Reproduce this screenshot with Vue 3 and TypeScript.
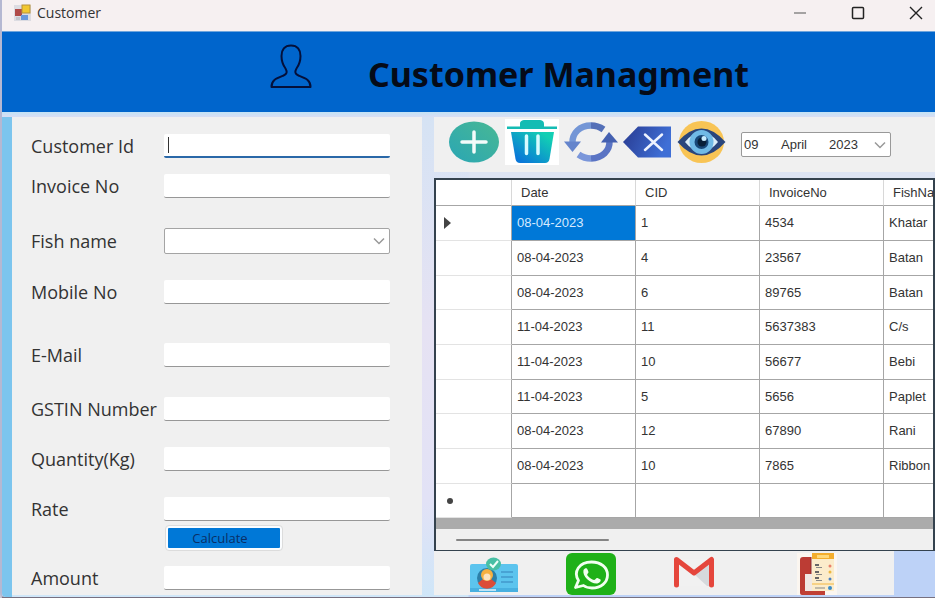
<script setup lang="ts">
import { ref } from 'vue'

interface Field {
  id: string
  label: string
  space: 'first' | 'near' | 'mid' | 'wide' | 'far'
  kind?: 'select'
}

interface Sale {
  date: string
  cid: string
  invoice: string
  fish: string
}

const fields: Field[] = [
  { id: 'customer-id', label: 'Customer Id', space: 'first' },
  { id: 'invoice-no', label: 'Invoice No', space: 'near' },
  { id: 'fish-name', label: 'Fish name', space: 'wide', kind: 'select' },
  { id: 'mobile-no', label: 'Mobile No', space: 'mid' },
  { id: 'email', label: 'E-Mail', space: 'far' },
  { id: 'gstin', label: 'GSTIN Number', space: 'wide' },
  { id: 'quantity', label: 'Quantity(Kg)', space: 'mid' },
  { id: 'rate', label: 'Rate', space: 'mid' },
]

const sales: Sale[] = [
  { date: '08-04-2023', cid: '1', invoice: '4534', fish: 'Khatar' },
  { date: '08-04-2023', cid: '4', invoice: '23567', fish: 'Batan' },
  { date: '08-04-2023', cid: '6', invoice: '89765', fish: 'Batan' },
  { date: '11-04-2023', cid: '11', invoice: '5637383', fish: 'C/s' },
  { date: '11-04-2023', cid: '10', invoice: '56677', fish: 'Bebi' },
  { date: '11-04-2023', cid: '5', invoice: '5656', fish: 'Paplet' },
  { date: '08-04-2023', cid: '12', invoice: '67890', fish: 'Rani' },
  { date: '08-04-2023', cid: '10', invoice: '7865', fish: 'Ribbon' },
]

const values = ref<Record<string, string>>({})
const amount = ref('')
const selected = ref(0)

function calculate(): void {
  const total = Number(values.value.quantity) * Number(values.value.rate)
  amount.value = Number.isFinite(total) ? String(total) : ''
}
</script>

<template>
  <div class="window">
    <div class="titlebar">
      <svg class="app-icon" viewBox="0 0 18 18" aria-hidden="true">
        <rect x="0" y="1" width="17" height="16" fill="#dcdce2" />
        <rect x="1" y="5" width="7" height="7" fill="#b04a48" />
        <rect x="8" y="1" width="8" height="8" fill="#f2c830" stroke="#b8923a" />
        <rect x="7" y="11" width="7" height="5" fill="#6a98dc" />
        <rect x="2" y="13" width="4" height="3" fill="#c4c6cc" />
      </svg>
      <span class="caption">Customer</span>
      <button class="win-btn" type="button" aria-label="Minimize">
        <svg viewBox="0 0 14 14"><path d="M1 7h12" stroke="#777" fill="none" stroke-width="1.3" /></svg>
      </button>
      <button class="win-btn" type="button" aria-label="Maximize">
        <svg viewBox="0 0 14 14"><rect x="1.5" y="1.5" width="11" height="11" rx="1" stroke="#222" fill="none" stroke-width="1.5" /></svg>
      </button>
      <button class="win-btn" type="button" aria-label="Close">
        <svg viewBox="0 0 14 14"><path d="M1 1l12 12M13 1L1 13" stroke="#222" fill="none" stroke-width="1.4" /></svg>
      </button>
    </div>

    <header class="banner">
      <svg class="person" viewBox="0 0 42 46" aria-hidden="true">
        <path
          d="M21 2.500C14.500 2.500 11.500 7 11.500 13C11.500 19 13 22 15.500 25.500C17.500 29 17 31 13.500 32.500C6 35.500 1.500 37 1.500 44H40.500C40.500 37 36 35.500 28.500 32.500C25 31 24.500 29 26.500 25.500C29 22 30.500 19 30.500 13C30.500 7 27.500 2.500 21 2.500Z"
          fill="none" stroke="#04103a" stroke-width="2" stroke-linejoin="round"
        />
      </svg>
      <h1>Customer Managment</h1>
    </header>

    <main>
      <form class="form" @submit.prevent="calculate">
        <div v-for="f in fields" :key="f.id" class="row" :class="f.space">
          <label :for="f.id">{{ f.label }}</label>
          <span v-if="f.kind === 'select'" class="select-wrap">
            <select :id="f.id" v-model="values[f.id]"></select>
            <svg class="chevron" viewBox="0 0 12 8"><path d="M1 1.500l5 5 5-5" fill="none" stroke="#999" stroke-width="1.500" /></svg>
          </span>
          <input v-else :id="f.id" v-model="values[f.id]" type="text" :class="{ active: f.space === 'first' }" />
        </div>
        <button class="calc" type="submit">Calculate</button>
        <div class="row near">
          <label for="amount">Amount</label>
          <input id="amount" v-model="amount" type="text" />
        </div>
      </form>

      <section class="records">
        <div class="toolbar">
          <button class="tool" type="button" aria-label="Add">
            <svg width="52" height="44" viewBox="0 0 52 44">
              <defs><linearGradient id="gAdd" x1="0" y1="1" x2="1" y2="0"><stop offset="0" stop-color="#2aa6b4" /><stop offset="1" stop-color="#48b894" /></linearGradient></defs>
              <ellipse cx="26" cy="22" rx="25" ry="20.500" fill="url(#gAdd)" />
              <path d="M26 12v20M14 22h24" stroke="#f3fbfa" stroke-width="3.500" stroke-linecap="round" />
            </svg>
          </button>
          <button class="tool" type="button" aria-label="Delete">
            <svg width="54" height="46" viewBox="0 0 54 46">
              <defs><linearGradient id="gBin" x1="0" y1="1" x2="1" y2="0"><stop offset="0.150" stop-color="#0a78d8" /><stop offset="0.850" stop-color="#12cfb4" /></linearGradient></defs>
              <rect width="54" height="46" fill="#fff" />
              <path d="M2 7.500H15V5C15 2 17 1 20 1H34C37 1 39 2 39 5V7.500H52V10H2Z" fill="#14bcb4" />
              <path d="M6 13H49L44.500 40C44 42.500 42.500 44 40 44H15C12.500 44 11 42.500 10.500 40Z" fill="url(#gBin)" />
              <path d="M21.500 17v17.500M33 17v17.500" stroke="#d8fbff" stroke-width="3.500" stroke-linecap="round" />
            </svg>
          </button>
          <button class="tool" type="button" aria-label="Refresh">
            <svg width="54" height="42" viewBox="0 0 54 42">
              <path d="M8.500 22C8 12 16 4.500 27 4.500" fill="none" stroke="#7496d6" stroke-width="6.500" />
              <path d="M27 4.500C32 4.500 36 6 39.500 8.500" fill="none" stroke="#5470b8" stroke-width="6.500" />
              <path d="M45.500 20C46 30 38 37 27 37.500" fill="none" stroke="#5a74c4" stroke-width="6.500" />
              <path d="M27 37.500C22 37.500 18 36 14.500 33.500" fill="none" stroke="#7a96da" stroke-width="6.500" />
              <path d="M0 20.500H17L8.500 31Z" fill="#6484cc" />
              <path d="M37 21.500H54L45 11Z" fill="#4460b0" />
            </svg>
          </button>
          <button class="tool" type="button" aria-label="Clear">
            <svg width="49" height="34" viewBox="0 0 49 34">
              <defs><linearGradient id="gClr" x1="0" y1="0" x2="1" y2="0.300"><stop offset="0" stop-color="#283a90" /><stop offset="1" stop-color="#3f6fd6" /></linearGradient></defs>
              <path d="M0 17L15 1.500H48V32.500H15Z" fill="url(#gClr)" />
              <path d="M22 9.500L39 25M39 9.500L22 25" stroke="#eef3ff" stroke-width="2.500" stroke-linecap="round" />
            </svg>
          </button>
          <button class="tool" type="button" aria-label="View">
            <svg width="49" height="44" viewBox="0 0 49 44">
              <ellipse cx="24.500" cy="22" rx="22.500" ry="21" fill="#f8c455" />
              <path d="M0.500 22Q24.500 -5 48.500 22Q24.500 49 0.500 22Z" fill="#2a467c" />
              <path d="M8 22Q24.500 2 41 22Q24.500 42 8 22Z" fill="#dbeef8" />
              <circle cx="24.500" cy="22" r="12" fill="#70bae6" />
              <circle cx="24.500" cy="22" r="7" fill="#184878" />
              <circle cx="25" cy="22" r="4.500" fill="#082038" />
              <circle cx="27" cy="18.500" r="2.500" fill="#c8ecff" />
            </svg>
          </button>
          <button class="date" type="button" aria-label="Date">
            <span class="day">09</span><span class="month">April</span><span class="year">2023</span>
            <svg class="chevron" viewBox="0 0 12 8"><path d="M1 1.500l5 5 5-5" fill="none" stroke="#999" stroke-width="1.500" /></svg>
          </button>
        </div>

        <div class="grid">
          <table>
            <colgroup><col class="c-mark" /><col /><col /><col /><col class="c-fish" /></colgroup>
            <thead>
              <tr><th></th><th>Date</th><th>CID</th><th>InvoiceNo</th><th>FishNa</th></tr>
            </thead>
            <tbody>
              <tr v-for="(s, i) in sales" :key="i" @click="selected = i">
                <td class="mark"><svg v-if="selected === i" width="7" height="12" viewBox="0 0 7 12"><path d="M0 0L7 6L0 12Z" fill="#444" /></svg></td>
                <td :class="{ selected: selected === i }">{{ s.date }}</td>
                <td>{{ s.cid }}</td>
                <td>{{ s.invoice }}</td>
                <td>{{ s.fish }}</td>
              </tr>
              <tr>
                <td class="mark"><svg width="12" height="8" viewBox="0 0 12 8"><circle cx="6" cy="4" r="3" fill="#444" /></svg></td>
                <td></td><td></td><td></td><td></td>
              </tr>
            </tbody>
          </table>
          <div class="void"></div>
          <div class="scroll"><div class="thumb"></div></div>
        </div>

        <div class="dock">
          <button class="tool" type="button" aria-label="Customer card">
            <svg width="50" height="40" viewBox="0 0 50 40">
              <rect x="1" y="11" width="48" height="28" rx="2" fill="#5cc4ee" />
              <rect x="1" y="35" width="48" height="4" fill="#48b0e0" />
              <circle cx="18" cy="25" r="10" fill="#2c7fa8" />
              <path d="M9 30A10 10 0 0 0 27 30L22 26H14Z" fill="#dc4c38" />
              <circle cx="18" cy="22" r="6" fill="#f6b040" />
              <circle cx="18" cy="24" r="3.500" fill="#fbe3c0" />
              <path d="M10 37h17" stroke="#e8f6fc" stroke-width="1.500" />
              <path d="M32 19h12M32 24h12M32 29h12" stroke="#4298cc" stroke-width="1.500" />
              <ellipse cx="24.500" cy="11" rx="7.500" ry="6.500" fill="#48bfa4" />
              <path d="M21 11l3 3 5-6" fill="none" stroke="#effff8" stroke-width="2" />
            </svg>
          </button>
          <button class="tool" type="button" aria-label="WhatsApp">
            <svg width="52" height="42" viewBox="0 0 52 42">
              <rect x="1" y="0" width="50" height="42" rx="6" fill="#1fb118" />
              <path d="M10.500 34.500L13.500 27.500C8 19 14 9 26.500 9C36 9 42.500 14.500 42.500 22C42.500 29.500 36 35 27 35C23.500 35 20.500 34 18.500 32.500Z" fill="none" stroke="#f2fff0" stroke-width="2.800" stroke-linejoin="round" />
              <path d="M18.500 17C20 14.500 22 15 22.500 16.500L23.500 19C23.500 20.500 21.500 21 22.500 22.500C24.500 25 27 26.500 29 27C30.500 27 31 24.500 32.500 25L35.500 26.500C36.500 28 34 30.500 31.500 30.500C25 30.500 17 23 18.500 17Z" fill="#f2fff0" />
            </svg>
          </button>
          <button class="tool" type="button" aria-label="Gmail">
            <svg width="42" height="40" viewBox="0 0 42 40">
              <path d="M4 6H38V33H4Z" fill="#f1f1f1" />
              <path d="M21 21L38 8V33H34Z" fill="#d6d9dc" />
              <path d="M3.500 32V6.500L21 20L38.500 6.500V32" fill="none" stroke="#e5463c" stroke-width="5" stroke-linecap="round" stroke-linejoin="round" />
            </svg>
          </button>
          <button class="tool" type="button" aria-label="Report">
            <svg width="40" height="42" viewBox="0 0 40 42">
              <rect x="0" y="0" width="40" height="42" fill="#fbf6f0" />
              <path d="M3 7Q3 4 6 4H14V42H5Q3 42 3 40Z" fill="#bc3c34" />
              <path d="M14 4V42" stroke="#8c2a26" stroke-width="1" />
              <rect x="8" y="21" width="7" height="18" fill="#f0e8e4" />
              <path d="M5 38H28V42H5Z" fill="#c04034" />
              <rect x="15" y="0" width="22" height="38" fill="#fbeccb" />
              <rect x="15" y="0" width="22" height="6" fill="#f3ad2c" />
              <rect x="20" y="2" width="12" height="3" fill="#ffd878" />
              <path d="M18 12h4M18 19h4M18 25h4" stroke="#666" stroke-width="2" />
              <path d="M19 14.500h6M19 21.500h6M19 27.500h6M18 35h10" stroke="#888" stroke-width="1" />
              <circle cx="33" cy="13" r="1.500" fill="#ea806a" /><circle cx="33" cy="19" r="1.500" fill="#edb840" />
              <circle cx="33" cy="26" r="1.500" fill="#4a80c0" /><circle cx="33" cy="35" r="2" fill="#3a8cc8" />
              <path d="M15 31h22" stroke="#f3b640" stroke-width="1" />
            </svg>
          </button>
        </div>
      </section>
    </main>
  </div>
</template>

<style>
body {
  background: #c9c6d4;
}
</style>

<style scoped>
* {
  box-sizing: border-box;
}
.window {
  min-height: 100vh;
  display: flex;
  flex-direction: column;
  border-left: 2px solid #b5b8d2;
  border-bottom: 2px solid #77707f;
  border-bottom-left-radius: 6px;
  overflow: hidden;
  font-family: "Open Sans", "Noto Sans", sans-serif;
  color: #333;
}
button {
  font: inherit;
  border: 0;
  padding: 0;
  background: none;
}
svg {
  display: block;
}
.titlebar {
  height: 32px;
  display: flex;
  align-items: center;
  padding: 0 12px 6px 12px;
  background: #f6f0f1;
  border-bottom: 1px solid #6fa5dc;
}
.app-icon {
  width: 18px;
  height: 18px;
}
.caption {
  flex: 1;
  margin-left: 5px;
  font-size: 14px;
  line-height: 20px;
}
.win-btn {
  width: 14px;
  height: 14px;
  margin-left: 44px;
}
.banner {
  height: 80px;
  display: flex;
  align-items: center;
  justify-content: center;
  gap: 56px;
  padding: 4px 0 0 82px;
  background: #0065cc;
}
.person {
  width: 42px;
  height: 46px;
  margin-bottom: 16px;
}
h1 {
  margin: 0;
  font-family: "Noto Sans", "Open Sans", sans-serif;
  font-size: 34px;
  line-height: 48px;
  font-weight: 700;
  color: #050b18;
  white-space: nowrap;
}
main {
  flex: 1;
  display: grid;
  grid-template-columns: minmax(0, 410fr) minmax(0, 501fr);
  gap: 12px;
  padding: 5px 0 2px 10px;
  background:
    linear-gradient(180deg, #c3e3f6 0, #d9def4 5px, transparent 5px),
    linear-gradient(90deg, #7cc5ee 0, #7cc5ee 10px, transparent 10px),
    linear-gradient(180deg, #d5e3f4, #e6e2f3 45%, #e2e2f6 80%, #cfe6f8) 0 0 / 50% 100% no-repeat,
    linear-gradient(180deg, #dde4f3 20%, #bdd2f7 60%);
}
.form {
  padding: 17px 32px 2px 19px;
  background: #f0f0f0;
}
.row {
  display: grid;
  grid-template-columns: 133px minmax(0, 1fr);
  align-items: center;
}
.row.near {
  margin-top: 16px;
}
.row.mid {
  margin-top: 26px;
}
.row.wide {
  margin-top: 30px;
}
.row.far {
  margin-top: 39px;
}
label {
  font-size: 18px;
  line-height: 24px;
  white-space: nowrap;
}
input {
  width: 100%;
  height: 24px;
  padding: 0 5px;
  border: 0;
  border-bottom: 1px solid #979797;
  border-radius: 2px;
  background: #fff;
  font: inherit;
  font-size: 14px;
  outline: none;
}
input.active {
  border-bottom: 2px solid #2a68a8;
  background: linear-gradient(#333, #333) 4px 3px / 1px 16px no-repeat, #fff;
}
.select-wrap {
  position: relative;
  display: block;
}
select {
  display: block;
  width: 100%;
  height: 26px;
  appearance: none;
  border: 1px solid #a4a4a4;
  border-radius: 2px;
  background: #fff;
}
.chevron {
  width: 12px;
  height: 8px;
  pointer-events: none;
}
.select-wrap .chevron {
  position: absolute;
  right: 5px;
  top: 9px;
}
.calc {
  display: block;
  width: 116px;
  height: 24px;
  margin: 5px 0 0 135px;
  padding-right: 8px;
  border: 2px solid #fbfdff;
  border-radius: 3px;
  outline: 1px solid #dcdcdc;
  background: #0078d7;
  color: #0a2f66;
  font-size: 13px;
  line-height: 20px;
}
.records {
  display: flex;
  flex-direction: column;
  min-width: 0;
}
.toolbar {
  height: 55px;
  display: flex;
  align-items: center;
  gap: 5px;
  padding: 0 0 6px 14px;
  background: #f0f0f0;
}
.tool {
  flex: none;
}
.date {
  display: flex;
  align-items: center;
  width: 150px;
  height: 25px;
  margin: 6px 0 0 10px;
  padding: 0 4px 0 2px;
  border: 1px solid #999;
  border-radius: 2px;
  background: #fff;
}
.date,
table {
  font-family: "Liberation Sans", sans-serif;
  font-size: 13px;
  color: #333;
}
.day {
  width: 37px;
  text-align: left;
}
.month {
  width: 48px;
  text-align: left;
}
.year {
  flex: 1;
  text-align: left;
}
.grid {
  margin-top: 6px;
  border: 1px solid #34424e;
  border-width: 2px 2px 1px;
  background: #fff;
  overflow: hidden;
}
table {
  table-layout: fixed;
  width: 100%;
  border-collapse: separate;
  border-spacing: 0;
}
.c-mark {
  width: 76px;
}
.c-fish {
  width: 49px;
}
th,
td {
  height: 35px;
  padding: 0 0 0 5px;
  border-right: 1px solid #a6a6a6;
  border-bottom: 1px solid #a6a6a6;
  text-align: left;
  font-weight: 400;
  line-height: 20px;
  white-space: nowrap;
}
tr:nth-child(3n) td {
  height: 34px;
}
th {
  height: 26px;
  padding-left: 9px;
  border-right-color: #d8d8d8;
}
th:last-child,
td:last-child {
  border-right: 0;
}
.mark {
  padding-left: 8px;
  border-bottom-color: #e3e3e3;
}
.selected {
  background: #0078d7;
  color: #d5eaff;
}
.void {
  height: 11px;
  background: #ababab;
}
.scroll {
  height: 21px;
  padding: 10px 0 0 20px;
  background: #f0f0f0;
}
.thumb {
  width: 153px;
  height: 2px;
  border-radius: 1px;
  background: #858585;
}
.dock {
  flex: 1;
  display: grid;
  grid-template-columns: 96px 108px 124px auto;
  align-items: start;
  justify-content: start;
  margin-right: 41px;
  padding: 2px 0 0 35px;
  background: #f0f0f0;
}
</style>
